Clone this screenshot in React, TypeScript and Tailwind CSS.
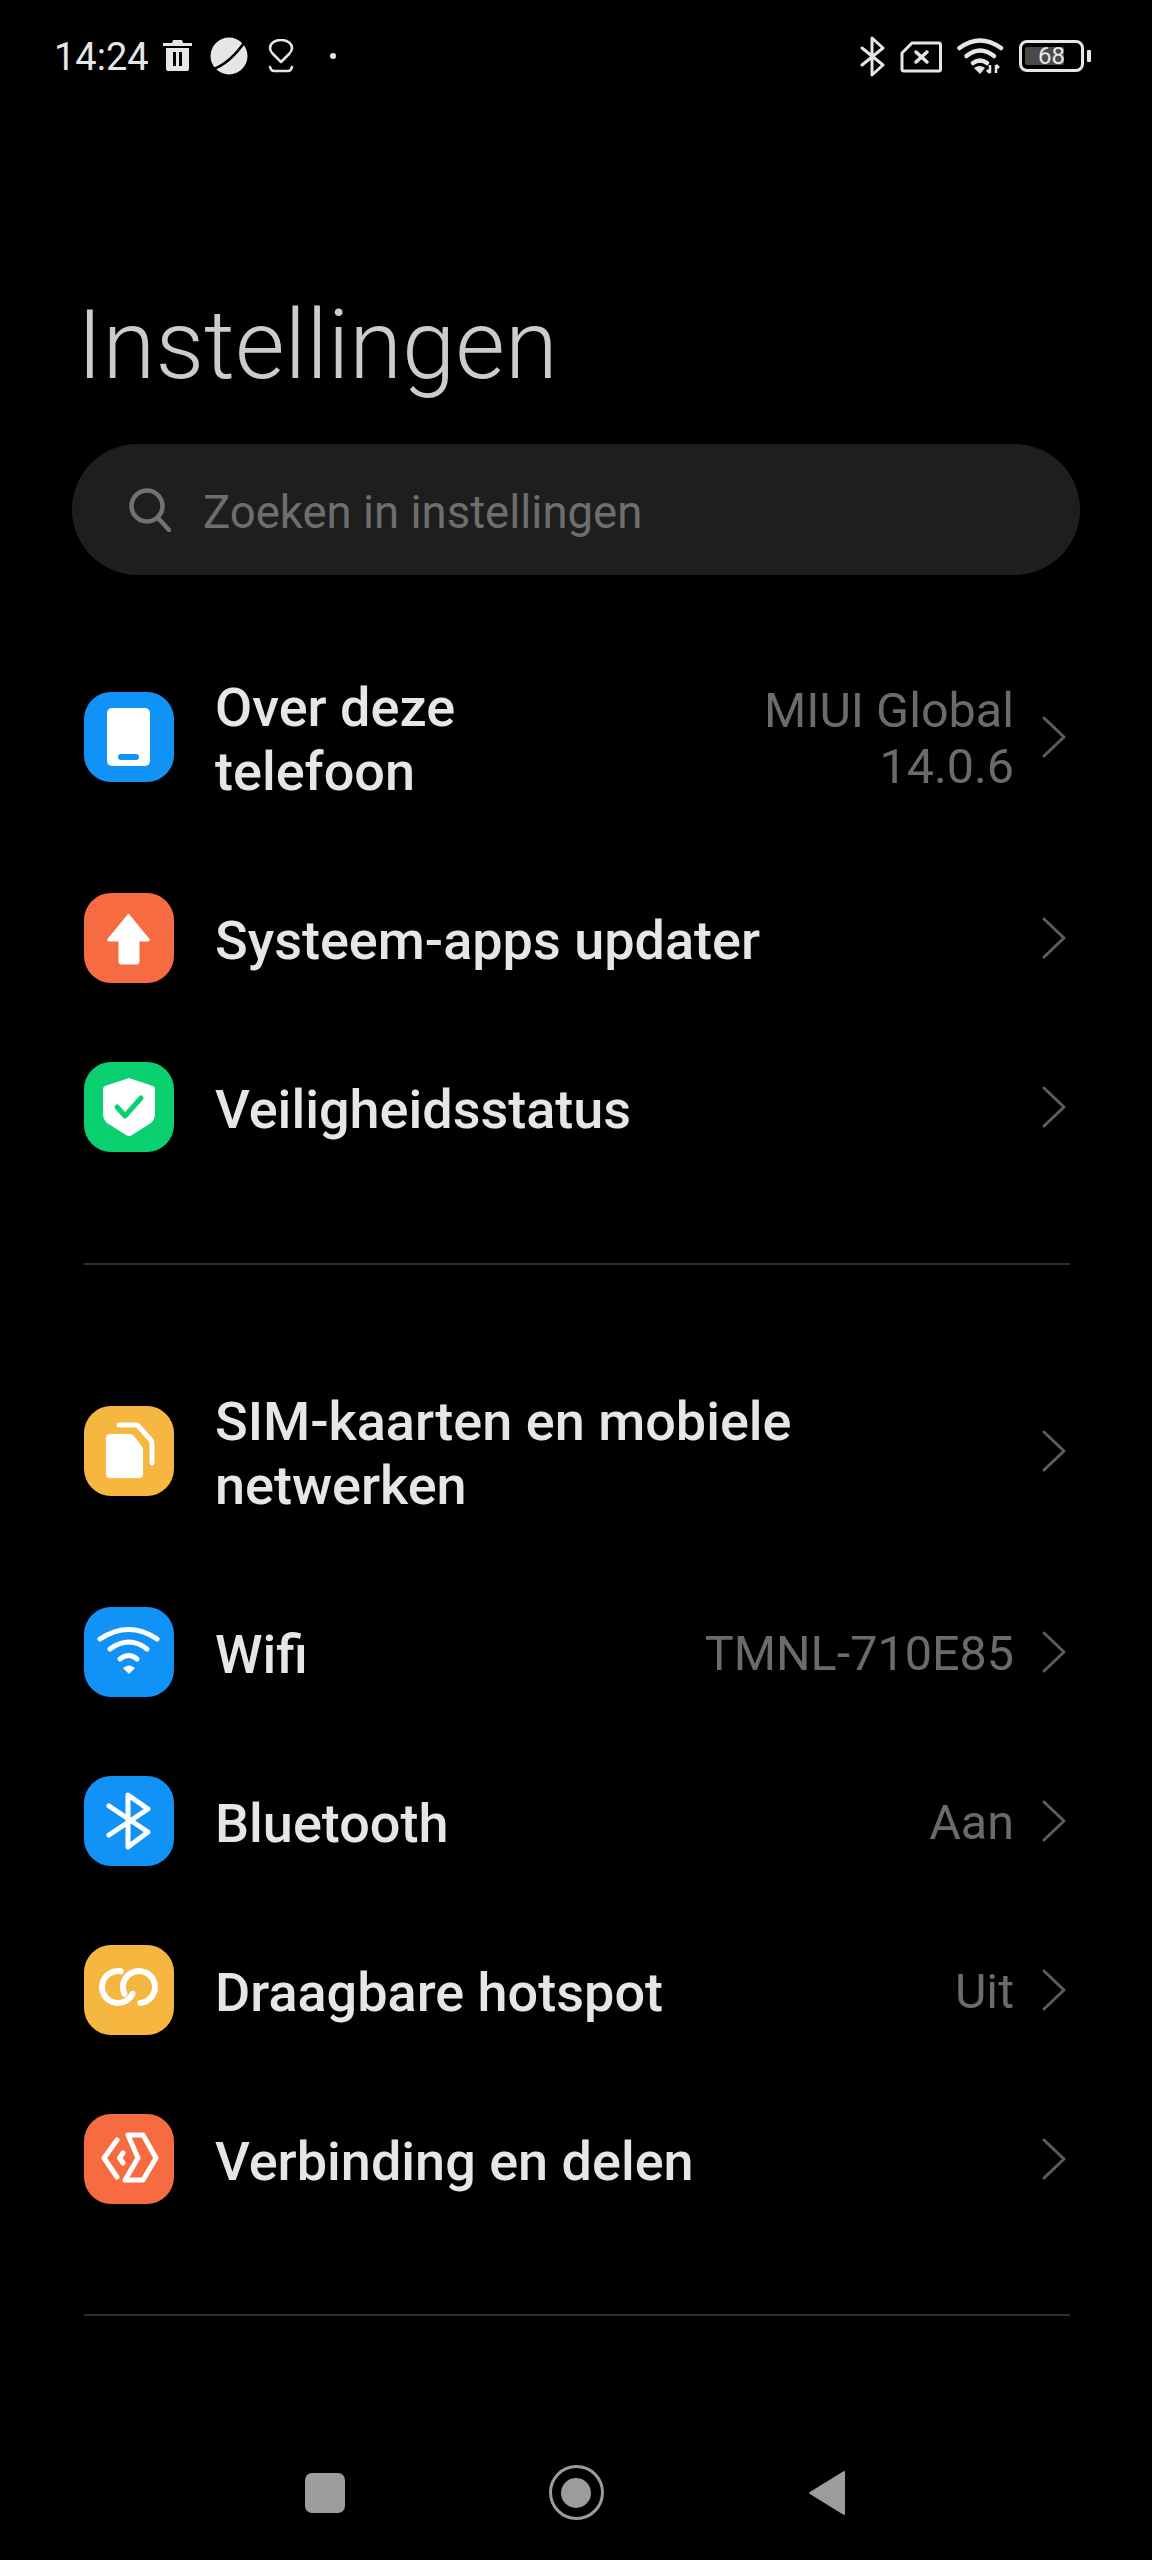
import React from "react";

const ROBOTO = "font-['Roboto',sans-serif]";

const PhoneIcon = () => (
  <svg viewBox="0 0 90 90" className="w-[90px] h-[90px]">
    <rect x="23" y="16" width="43" height="58" rx="5" fill="white" />
    <rect x="34" y="62" width="21" height="6" rx="3" fill="#1092f6" />
  </svg>
);

const ArrowIcon = () => (
  <svg viewBox="0 0 90 90" className="w-[90px] h-[90px]">
    <path
      d="M44.5 21 L65 46 Q66 48 64 48 H55 V69 Q55 71 53 71 H37 Q35 71 35 69 V48 H25 Q23 48 24 46 Z"
      fill="white"
      stroke="white"
      strokeWidth="1"
      strokeLinejoin="round"
    />
  </svg>
);

const ShieldIcon = () => (
  <svg viewBox="0 0 90 90" className="w-[90px] h-[90px]">
    <path
      d="M45 16 L69 24 Q71 25 71 27 V52 Q71 57 67 61 L48 73 Q45 75 42 73 L23 61 Q19 57 19 52 V27 Q19 25 21 24 Z"
      fill="white"
    />
    <path
      d="M33 45 L41 54 L57 36"
      fill="none"
      stroke="#0ad06f"
      strokeWidth="5"
      strokeLinecap="round"
      strokeLinejoin="round"
    />
  </svg>
);

const SimIcon = () => (
  <svg viewBox="0 0 90 90" className="w-[90px] h-[90px]">
    <path
      d="M26 28 H46 Q48 28 50 30 L57 39 Q59 41 59 44 V68 Q59 72 55 72 H26 Q22 72 22 68 V32 Q22 28 26 28 Z"
      fill="white"
    />
    <path
      d="M35 19 H52 Q54 19 55 21 L66 33 Q68 35 68 38 V57"
      fill="none"
      stroke="white"
      strokeWidth="5"
      strokeLinecap="round"
    />
  </svg>
);

const WifiIcon = () => (
  <svg viewBox="0 0 90 90" className="w-[90px] h-[90px]">
    <g fill="none" stroke="white" strokeWidth="5" strokeLinecap="round">
      <path d="M16 32 Q45 13 73 32" />
      <path d="M26 42 Q45 28 63 42" />
      <path d="M36 52 Q45 45 53 52" />
    </g>
    <path d="M39 61 Q45 56 51 61 L45 67 Z" fill="white" />
  </svg>
);

const BluetoothIcon = () => (
  <svg viewBox="0 0 90 90" className="w-[90px] h-[90px]">
    <path
      d="M25 30 L64 56 L44 71 V19 L64 33 L25 59"
      fill="none"
      stroke="white"
      strokeWidth="5"
      strokeLinecap="round"
      strokeLinejoin="round"
    />
  </svg>
);

const LinkIcon = () => (
  <svg viewBox="0 0 90 90" className="w-[90px] h-[90px]">
    <g fill="none" stroke="white" strokeWidth="6" strokeLinecap="round">
      <path d="M36.8 26.2 A16 16 0 1 0 48.5 48.8" />
      <path d="M40.5 48.8 A16 16 0 1 1 56.4 57.9" />
    </g>
  </svg>
);

const ShareIcon = () => (
  <svg viewBox="0 0 90 90" className="w-[90px] h-[90px]">
    <g
      fill="none"
      stroke="white"
      strokeWidth="5"
      strokeLinecap="round"
      strokeLinejoin="round"
    >
      <path d="M33 26 L20 44 L33 63" />
      <path d="M39 39 L35.5 44 L39 49" />
      <path d="M44 21 H59 L72 44 L59 66 H41 L54 44 Z" />
    </g>
  </svg>
);

const Chevron = () => (
  <svg viewBox="0 0 24 42" className="w-6 h-[42px] shrink-0 mr-[2px]">
    <path
      d="M2 2 L22 21 L2 40"
      fill="none"
      stroke="#5c5c5c"
      strokeWidth="3"
      strokeLinecap="round"
      strokeLinejoin="round"
    />
  </svg>
);

interface RowProps {
  icon: React.ReactNode;
  color: string;
  title: string[];
  value?: string[];
}

const Row: React.FC<RowProps> = ({ icon, color, title, value }) => (
  <div
    className={`flex items-center ${
      title.length > 1 ? "h-[233px]" : "h-[169px]"
    }`}
  >
    <div
      className={`w-[90px] h-[90px] rounded-[27px] shrink-0 mr-[41px] ${color}`}
    >
      {icon}
    </div>
    <div className="flex-1 pt-[6px] text-[54px] leading-[64px] font-medium text-[#e6e6e6]">
      {title.map((line) => (
        <div key={line}>{line}</div>
      ))}
    </div>
    {value && (
      <div className="pt-[4px] text-[48.5px] leading-[56px] text-[#6b6b6b] text-right mr-[28px]">
        {value.map((line) => (
          <div key={line}>{line}</div>
        ))}
      </div>
    )}
    <Chevron />
  </div>
);

const StatusBar = () => (
  <div className="h-[114px] pl-[54px] pr-[61px] pt-[36px] flex items-start">
    <span className="text-[38px] leading-[42px] text-[#e6e6e6] w-[109px]">
      14:24
    </span>
    <svg viewBox="0 0 29 31" className="w-[29px] h-[31px] mt-1 mr-[18px]">
      <path
        d="M10 0 H19 L20 3 H29 V6 H0 V3 H9 Z M3 8 H26 V29 Q26 31 24 31 H5 Q3 31 3 29 Z"
        fill="#e6e6e6"
      />
      <rect x="10" y="12" width="3" height="14" fill="#000" />
      <rect x="16" y="12" width="3" height="14" fill="#000" />
    </svg>
    <svg viewBox="0 0 38 38" className="w-[38px] h-[38px] mt-px mr-5">
      <circle cx="19" cy="19" r="18.5" fill="#e6e6e6" />
      <path d="M1 33 Q20 27 36 3" fill="none" stroke="#000" strokeWidth="2.5" />
    </svg>
    <svg viewBox="0 0 26 34" className="w-[26px] h-[34px] mt-[3px] mr-[36px]">
      <path
        d="M13 23 L5 15 Q2 12 2 9 A11 8 0 0 1 24 9 Q24 12 21 15 Z"
        fill="none"
        stroke="#e6e6e6"
        strokeWidth="2.5"
        strokeLinejoin="round"
      />
      <path
        d="M2 28 Q3 32 6 32 H20 Q23 32 24 28"
        fill="none"
        stroke="#e6e6e6"
        strokeWidth="2.5"
        strokeLinecap="round"
      />
    </svg>
    <div className="w-[6px] h-[6px] rounded-full bg-[#e6e6e6] mt-[17px]" />
    <div className="flex-1" />
    <svg viewBox="0 0 25 41" className="w-[25px] h-[41px] mr-[15px]">
      <path
        d="M2 12 L23 29 L12 39 V2 L23 12 L2 29"
        fill="none"
        stroke="#e6e6e6"
        strokeWidth="3"
        strokeLinecap="round"
        strokeLinejoin="round"
      />
    </svg>
    <svg viewBox="0 0 42 32" className="w-[42px] h-8 mt-[5px] mr-[15px]">
      <path
        d="M12 2 H39 Q40.5 2 40.5 4 V28 Q40.5 30 39 30 H4 Q2 30 2 28 V12 Z"
        fill="none"
        stroke="#e6e6e6"
        strokeWidth="3"
        strokeLinejoin="round"
      />
      <path
        d="M16 11 L27 21 M27 11 L16 21"
        stroke="#e6e6e6"
        strokeWidth="3.5"
        strokeLinecap="round"
      />
    </svg>
    <svg viewBox="0 0 47 36" className="w-[47px] h-9 mt-[2px] mr-[15px]">
      <g fill="none" stroke="#e6e6e6" strokeWidth="4.5" strokeLinecap="round">
        <path d="M2.5 10 Q23 -5 44 10" />
        <path d="M9.5 18 Q23 7 37 18" />
        <path d="M16 25 Q23 20 30 25" />
      </g>
      <path d="M17 30 Q23 26 28 30 L23 36 Z" fill="#e6e6e6" />
      <path
        d="M33 27 V35 M33 35 L30 32 M39 35 V27 M39 27 L42 30"
        fill="none"
        stroke="#e6e6e6"
        strokeWidth="2.5"
      />
    </svg>
    <div className="relative w-[65px] h-8 mt-1 rounded-[8px] border-[3px] border-[#e6e6e6] px-[3px] pt-[4px]">
      <div className="h-[18px] w-[39px] rounded-[2px] bg-[#4a4a4a]" />
      <span className="absolute inset-y-0 left-4 flex items-center text-[24px] leading-none text-[#e6e6e6]">
        68
      </span>
    </div>
    <div className="w-1 h-3 ml-[3px] mt-[14px] rounded-[1px] bg-[#e6e6e6]" />
  </div>
);

const NavBar = () => (
  <div className="mt-auto h-[120px] pr-[2px] flex items-start justify-center pt-[25px]">
    <div className="w-[40px] h-[40px] mt-2 rounded-[7px] bg-[#9c9c9c]" />
    <div className="w-[55px] h-[55px] mx-[204px] rounded-full border-[3px] border-[#9c9c9c] flex items-center justify-center">
      <div className="w-[30px] h-[30px] rounded-full bg-[#9c9c9c]" />
    </div>
    <svg viewBox="0 0 38 46" className="w-[38px] h-[46px] mt-[5px]">
      <path
        d="M36 2 V44 L2 23 Z"
        fill="#9c9c9c"
        stroke="#9c9c9c"
        strokeWidth="2"
        strokeLinejoin="round"
      />
    </svg>
  </div>
);

export default function App() {
  return (
    <div className={`h-[2560px] flex flex-col bg-black overflow-hidden ${ROBOTO}`}>
      <StatusBar />
      <h1 className="pl-[77px] mt-[175px] text-[96px] leading-[112px] font-light text-[#cccccc]">
        Instellingen
      </h1>
      <div className="mx-[72px] mt-[43px] h-[131px] rounded-full bg-[#1e1e1e] flex items-center pl-[57px]">
        <svg viewBox="0 0 42 44" className="w-[42px] h-11 mr-[32px]">
          <circle cx="18" cy="18" r="15.5" fill="none" stroke="#727272" strokeWidth="4.5" />
          <path d="M29 30 L40 42" stroke="#727272" strokeWidth="4.5" strokeLinecap="round" />
        </svg>
        <span className="pt-[7px] text-[45.5px] text-[#6e6e6e]">Zoeken in instellingen</span>
      </div>

      <div className="px-[84px] mt-[45px]">
        <Row
          icon={<PhoneIcon />}
          color="bg-[#1092f6]"
          title={["Over deze", "telefoon"]}
          value={["MIUI Global", "14.0.6"]}
        />
        <Row icon={<ArrowIcon />} color="bg-[#f76b43]" title={["Systeem-apps updater"]} />
        <Row icon={<ShieldIcon />} color="bg-[#0ad06f]" title={["Veiligheidsstatus"]} />
        <div className="h-[2px] mt-[72px] mb-[69px] -mr-[2px] bg-[#2e2e2e]" />
        <Row
          icon={<SimIcon />}
          color="bg-[#f5b740]"
          title={["SIM-kaarten en mobiele", "netwerken"]}
        />
        <Row icon={<WifiIcon />} color="bg-[#1092f6]" title={["Wifi"]} value={["TMNL-710E85"]} />
        <Row icon={<BluetoothIcon />} color="bg-[#1092f6]" title={["Bluetooth"]} value={["Aan"]} />
        <Row icon={<LinkIcon />} color="bg-[#f5b740]" title={["Draagbare hotspot"]} value={["Uit"]} />
        <Row icon={<ShareIcon />} color="bg-[#f76b43]" title={["Verbinding en delen"]} />
        <div className="h-[2px] mt-[71px] -mr-[2px] bg-[#2e2e2e]" />
      </div>

      <NavBar />
    </div>
  );
}
